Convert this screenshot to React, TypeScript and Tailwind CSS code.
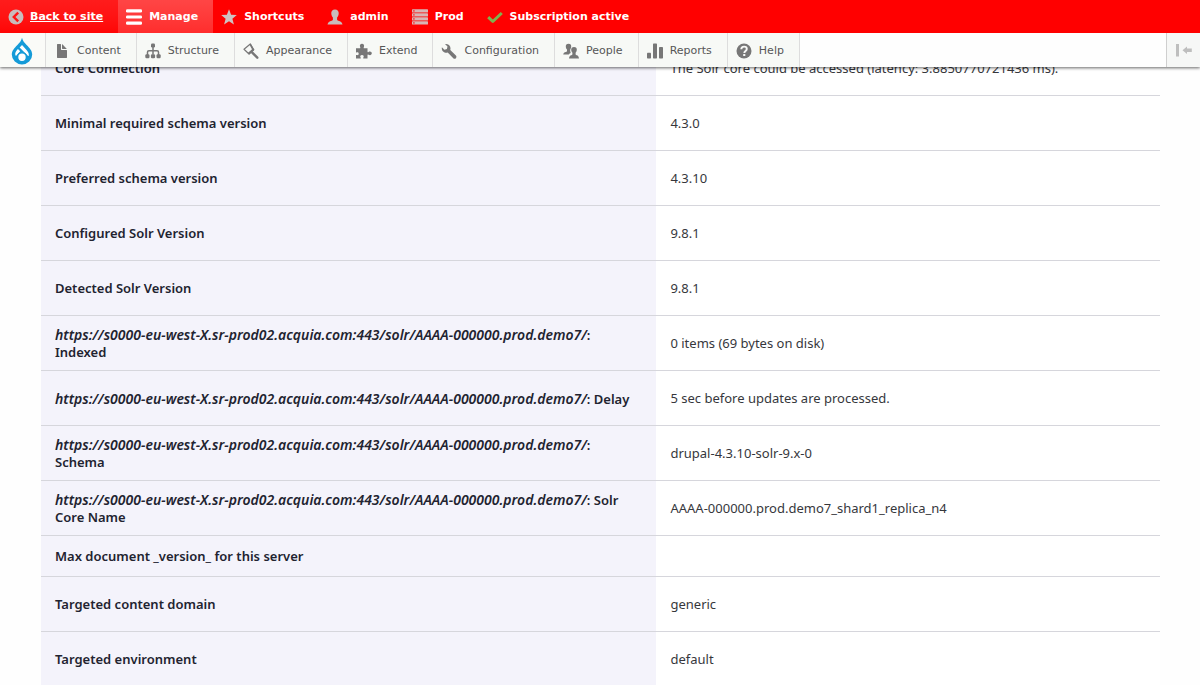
import type { ReactNode } from "react";

const icons: Record<string, ReactNode> = {
  back: (
    <>
      <circle cx="8" cy="8" r="7.5" fill="#c9bcbc" />
      <path d="M10.2 3.6 5.8 8l4.4 4.4" fill="none" stroke="#ff1414" strokeWidth="2.4" />
    </>
  ),
  menu: (
    <g fill="#fff">
      <rect x="0" y="0.3" width="16" height="3.2" rx="1.3" />
      <rect x="0" y="6.4" width="16" height="3.2" rx="1.3" />
      <rect x="0" y="12.5" width="16" height="3.2" rx="1.3" />
    </g>
  ),
  star: <path fill="#cfc2c2" d="m8 .3 2.1 5.4 5.7.3-4.4 3.7 1.5 5.8L8 12.3l-4.9 3.2 1.5-5.8L.2 6l5.7-.3z" />,
  user: (
    <path
      fill="#c9bcbc"
      d="M8 .4c2.6 0 3.9 1.6 3.7 4.2-.1 1.8-.7 3.1-1.6 4v1.9c0 .7.5 1 1.2 1.2 2.3.5 3.7 1.5 4.2 3.9H.5c.5-2.4 1.9-3.4 4.2-3.9.7-.2 1.2-.5 1.2-1.2V8.6c-.9-.9-1.5-2.2-1.6-4C4.1 2 5.4.4 8 .4z"
    />
  ),
  server: (
    <g>
      {[0.2, 4.2, 8.2, 12.2].map((y) => (
        <g key={y}>
          <rect x="0" y={y} width="16" height="3.4" rx="0.6" fill="#d8b5b5" />
          <rect x="1.2" y={y + 1} width="1.4" height="1.4" fill="#ff2020" />
        </g>
      ))}
    </g>
  ),
  check: <path d="M1.2 8.2l4.6 4.3L14.8 4" fill="none" stroke="#7fb24e" strokeWidth="3" strokeLinejoin="round" />,
  file: (
    <path d="M12.502 7h-5c-.276 0-.502-.225-.502-.5v-5c0-.275-.225-.5-.5-.5h-3c-.276 0-.5.225-.5.5v13.029c0 .275.225.5.5.5h9.002c.275 0 .5-.225.5-.5V7.5c0-.275-.225-.5-.5-.5zM8.502 6h4c.275 0 .34-.159.146-.354L8.355 1.354C8.16 1.159 8.002 1.225 8.002 1.5v4c0 .275.225.5.5.5z" />
  ),
  structure: (
    <>
      <path d="M8 4v7.5M2.5 12V9.2Q2.5 7.8 3.9 7.8h8.2q1.4 0 1.4 1.4V12" fill="none" stroke="currentColor" strokeWidth="1.5" />
      <rect x="6" y="0.5" width="4" height="4" rx="1.2" />
      <rect x="0.3" y="11.3" width="4.2" height="4" rx="1.2" />
      <rect x="5.9" y="11.3" width="4.2" height="4" rx="1.2" />
      <rect x="11.5" y="11.3" width="4.2" height="4" rx="1.2" />
    </>
  ),
  brush: (
    <>
      <path d="M7.3 1 1 6.2l5 4.8 4.5-4z" fill="none" stroke="currentColor" strokeWidth="1.2" strokeLinejoin="round" />
      <path d="M7.7.4 11.5 6.8 6.3 11.5 4.8 10 9 6.3 6.5 1.7z" />
      <path d="M9.3 9.7l5 5" stroke="currentColor" strokeWidth="2.4" strokeLinecap="round" />
    </>
  ),
  puzzle: (
    <path d="M0 5.3h3.7c.7 0 .8-.5.5-1.1C3.3 2.2 4.4.8 6 .8s2.7 1.4 1.8 3.4c-.3.6-.2 1.1.5 1.1h3.2v3.3c0 .6.5.7 1 .3 1.6-1.1 3.3-.2 3.3 1.4s-1.7 2.5-3.3 1.4c-.5-.4-1-.3-1 .3v3.5H7.700c-.6 0-.6-.5-.3-1 .9-1.500.1-2.600-1.400-2.600s-2.300 1.100-1.400 2.600c.3.500.3 1-.3 1H0v-3.200c0-.5.300-.5.800-.3 1.200.5 1.900-.2 1.900-1.300S2 8.900.8 9.400C.3 9.600 0 9.600 0 9.100z" />
  ),
  wrench: (
    <path d="M14.9 12.6 9.3 7c.6-2-.1-4.100-1.700-5.200C6.500 1 5.200.8 4 1.100l2.500 2.500-.6 2.500-2.500.6L.9 4.200c-.4 1.500.1 3.200 1.200 4.300 1.300 1.300 3.100 1.600 4.600 1.100l5.600 5.600c.7.7 1.900.7 2.600 0s.7-1.900 0-2.600z" />
  ),
  people: (
    <>
      <path d="M5.5.8c2 0 2.900 1.200 2.700 3.100-.1 1-.4 1.700-.8 2.200-.4 1.400-.2 2.800.4 3.900-.8.3-1.600.7-2 1.500H.2c.3-1.500 1.200-2.200 2.700-2.500.9-.2 1.100-.5 1.100-1.300V6.600c-.7-.6-1.100-1.500-1.200-2.700C2.700 2 3.600.8 5.500.8z" />
      <path d="M11 4c2 0 3 1.200 2.800 3.100-.1 1.200-.5 2.100-1.200 2.700v1.300c0 .8.3 1 1.100 1.200 1.300.3 2.100 1.300 2.300 3.200H6c.2-1.900 1-2.900 2.300-3.200.8-.2 1.100-.4 1.100-1.200V9.800c-.7-.6-1.100-1.500-1.200-2.700C8.100 5.200 9.100 4 11 4z" />
    </>
  ),
  reports: (
    <>
      <rect x="0" y="9.8" width="4" height="5.7" rx="0.7" />
      <rect x="6" y="0.5" width="4" height="15" rx="0.7" />
      <rect x="12" y="4" width="4" height="11.5" rx="0.7" />
    </>
  ),
  help: (
    <>
      <circle cx="8" cy="8" r="7.5" />
      <path d="M5.3 6.3C5.3 4.5 6.4 3.6 8.1 3.6s2.7 1 2.7 2.3c0 2-2.500 2-2.500 4" fill="none" stroke="#f7f8f6" strokeWidth="1.9" />
      <rect x="7.2" y="11" width="2.1" height="2" fill="#f7f8f6" />
    </>
  ),
};

function Icon({ name }: { name: string }) {
  return (
    <svg viewBox="0 0 16 16" className="size-4 shrink-0" fill="currentColor" aria-hidden="true">
      {icons[name]}
    </svg>
  );
}

const topItems = [
  { icon: "menu", label: "Manage", active: true },
  { icon: "star", label: "Shortcuts" },
  { icon: "user", label: "admin" },
  { icon: "server", label: "Prod" },
  { icon: "check", label: "Subscription active" },
];

const trayItems = [
  { icon: "file", label: "Content" },
  { icon: "structure", label: "Structure" },
  { icon: "brush", label: "Appearance" },
  { icon: "puzzle", label: "Extend" },
  { icon: "wrench", label: "Configuration" },
  { icon: "people", label: "People" },
  { icon: "reports", label: "Reports" },
  { icon: "help", label: "Help" },
];

const core = "https://s0000-eu-west-X.sr-prod02.acquia.com:443/solr/AAAA-000000.prod.demo7/";

const rows: { url?: string; name: string; value: string }[] = [
  { name: "Core Connection", value: "The Solr core could be accessed (latency: 3.8850770721436 ms)." },
  { name: "Minimal required schema version", value: "4.3.0" },
  { name: "Preferred schema version", value: "4.3.10" },
  { name: "Configured Solr Version", value: "9.8.1" },
  { name: "Detected Solr Version", value: "9.8.1" },
  { url: core, name: ": Indexed", value: "0 items (69 bytes on disk)" },
  { url: core, name: ": Delay", value: "5 sec before updates are processed." },
  { url: core, name: ": Schema", value: "drupal-4.3.10-solr-9.x-0" },
  { url: core, name: ": Solr Core Name", value: "AAAA-000000.prod.demo7_shard1_replica_n4" },
  { name: "Max document _version_ for this server", value: "" },
  { name: "Targeted content domain", value: "generic" },
  { name: "Targeted environment", value: "default" },
];

function Toolbar() {
  return (
    <header className="fixed inset-x-0 top-0 z-10 font-['DejaVu_Sans',Verdana,sans-serif] text-[11px] shadow-[0_1px_3px_rgba(0,0,0,0.6)]">
      <nav className="flex h-[33px] bg-[#ff0000] font-bold text-white" aria-label="Administration">
        <a href="#site" className="flex items-center gap-1.5 bg-linear-to-b from-[#ff1c1c] to-[#ff0505] pt-px pr-[15px] pl-2 underline">
          <Icon name="back" />
          Back to site
        </a>
        {topItems.map((item) => (
          <a
            key={item.label}
            href="#toolbar"
            className={
              item.active
                ? "flex items-center gap-[7px] bg-linear-to-b from-[#ff4545] to-[#ff2d2d] pt-px pr-[15px] pl-2"
                : "flex items-center gap-[7px] pt-px pr-[15px] pl-2"
            }
          >
            <Icon name={item.icon} />
            {item.label}
          </a>
        ))}
      </nav>
      <nav className="flex h-[34px] bg-[#fefefe] text-[#565656]" aria-label="Manage">
        <a href="#home" aria-label="Drupal" className="flex w-[46px] items-center justify-center border-r border-[#dddddd] bg-[#fafbf8] pt-px pr-0.5">
          <svg viewBox="0 0 22 28" className="h-7 w-[22px]" aria-hidden="true">
            <path d="M11 .8C11.6 3.8 13.5 5.8 15.6 7.9c2.9 2.9 5.6 5.600 5.600 9.700A10.200 9.900 0 0 1 .8 17.600c0-4.100 2.700-6.800 5.600-9.700C8.500 5.800 10.400 3.800 11 .8z" fill="#159bd8" />
            <g fill="#fff">
              <path d="M6.9 12 9.2 14.300 5.400 18.500C5 18.900 4.500 18.700 4.300 18.100 3.800 16 5 13.900 6.900 12z" />
              <path d="M11 8c1 1.200 2.200 2.400 3.400 3.700 1.900 2 3.400 3.800 3.400 5.800 0 .4 0 .8-.1 1.200-.1.400-.5.4-.8.1L8.600 10.400C9.500 9.600 10.300 8.800 11 8z" />
              <circle cx="11" cy="20.2" r="4.5" stroke="#159bd8" strokeWidth="1.6" />
            </g>
          </svg>
        </a>
        {trayItems.map((item) => (
          <a key={item.label} href="#section" className="flex items-center gap-[7px] border-r border-[#dddddd] bg-[#f7f9f6] pt-0.5 pr-[15px] pl-2">
            <span className="flex text-[#777777]">
              <Icon name={item.icon} />
            </span>
            {item.label}
          </a>
        ))}
        <button
          type="button"
          aria-label="Vertical orientation"
          className="ml-auto flex w-[34px] items-center justify-center border-l border-[#cfcfcf] bg-[#f6f7f6] text-[#bebebe]"
        >
          <svg viewBox="0 0 16 14" className="h-3.5 w-4" fill="currentColor" aria-hidden="true">
            <rect x="0" y="1" width="3" height="12.5" />
            <path d="M6.5 7.3 11 3.5v2h4.800v3.600H11v2z" />
          </svg>
        </button>
      </nav>
    </header>
  );
}

export default function App() {
  return (
    <div className="h-screen overflow-hidden bg-[#fefefe]">
      <Toolbar />
      <main className="pt-[41px] pr-10 pl-[41px] font-['Noto_Sans',sans-serif] text-[13px] leading-[17px] text-[#36373c]">
        <table className="w-full table-fixed border-separate border-spacing-0 text-left">
          <colgroup>
            <col className="w-[55%]" />
            <col />
          </colgroup>
          <tbody>
            {rows.map((row) => (
              <tr key={(row.url ?? "") + row.name} className={row.value ? "h-[55px]" : "h-[41px]"}>
                <th scope="row" className="border-b border-[#d6d6dc] bg-[#f4f3fb] px-3.5 pt-px font-semibold text-[#222330]">
                  {row.url && <em className="text-sm leading-[17px]">{row.url}</em>}
                  {row.name}
                </th>
                <td className="border-b border-[#d6d6dc] bg-white px-3.5 pt-px">{row.value}</td>
              </tr>
            ))}
          </tbody>
        </table>
      </main>
    </div>
  );
}
